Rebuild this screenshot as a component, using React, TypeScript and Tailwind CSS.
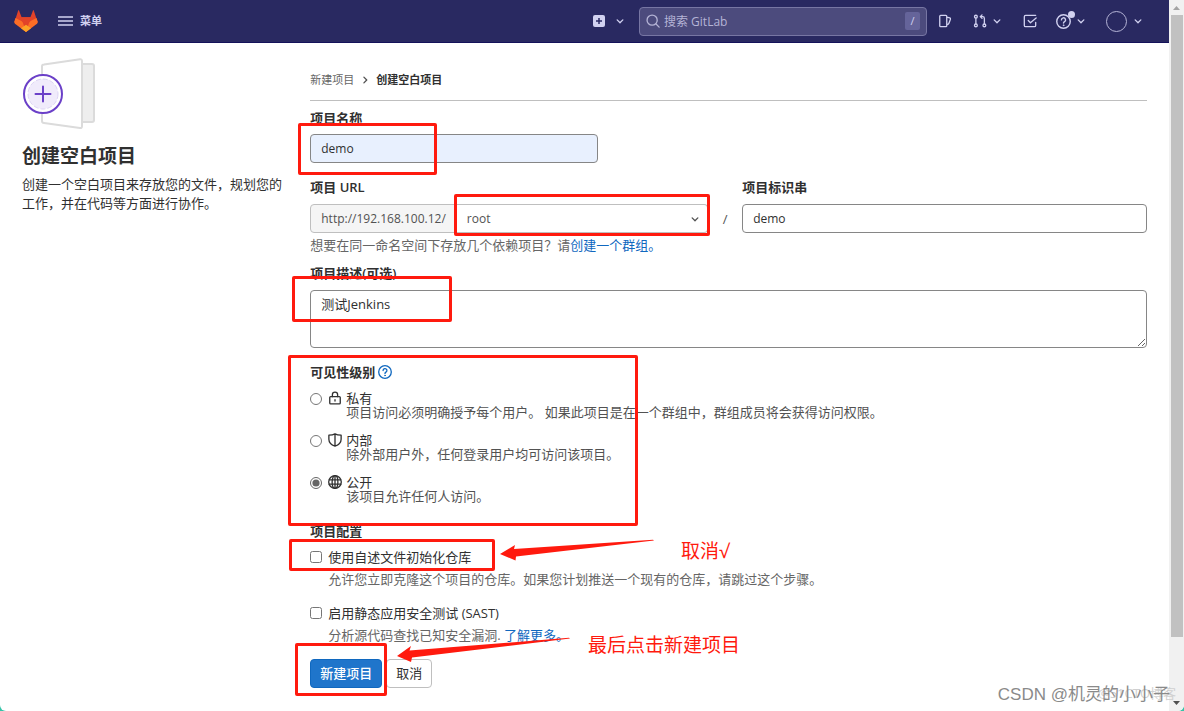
import { useState } from "react";
import type { ReactNode } from "react";
import clsx from "clsx";

interface IconProps {
  className?: string;
}

function ChevronDown({ className = "size-3.5" }: IconProps) {
  return (
    <svg viewBox="0 0 16 16" fill="currentColor" className={className}>
      <path d="M4.22 6.22a.75.75 0 0 1 1.06 0L8 8.94l2.72-2.72a.75.75 0 1 1 1.06 1.06l-3.25 3.25a.75.75 0 0 1-1.06 0L4.22 7.28a.75.75 0 0 1 0-1.06z" />
    </svg>
  );
}

function StrokeIcon({ className = "size-3.5", children }: IconProps & { children: ReactNode }) {
  return (
    <svg
      viewBox="0 0 16 16"
      fill="none"
      stroke="currentColor"
      strokeWidth="1.5"
      strokeLinecap="round"
      strokeLinejoin="round"
      className={className}
    >
      {children}
    </svg>
  );
}

function Logo() {
  return (
    <svg viewBox="0 0 24 22" className="h-[22px] w-6">
      <path d="M12 22 .5 12 4.200.400Q4.600-.300 5 .400L7.600 7.200h8.800L19 .400q.4-.7.8 0L23.500 12z" fill="#e24329" />
      <path d="M1.500 8 .3 11.600q-.3 1.400.7 2.200L12 22 7.300 8z" fill="#fc6d26" />
      <path d="M22.500 8l1.200 3.600q.3 1.400-.7 2.200L12 22l4.700-14z" fill="#fc6d26" />
      <path d="M1.500 8 7.300 7.200h9.400l5.800.8Q17 10 12 15 7 10 1.500 8z" fill="#e24329" />
      <path d="M7 18.200 12 14.800l5 3.400L12 22z" fill="#fca326" />
    </svg>
  );
}

function Illustration() {
  return (
    <svg viewBox="0 0 74 72" className="h-[72px] w-[74px]" fill="none">
      <path d="M60 6h10q2 0 2 2v54q0 2-2 2H60" fill="#eee" stroke="#dbdbdb" strokeWidth="2" />
      <path
        d="M22 6.500 58 1.200q2-.2 2 2v65q0 2-2 1.800L22 65q-2-.3-2-2V8.300q0-1.600 2-1.800z"
        fill="#fff"
        stroke="#dbdbdb"
        strokeWidth="2"
      />
      <circle cx="21" cy="36" r="19" fill="#fff" stroke="#6b40c8" strokeWidth="2" />
      <circle cx="21" cy="36" r="15" fill="#f0ebfb" stroke="#ddd4f5" strokeDasharray="5 2" />
      <path d="M13.500 36h15M21 28.500v15" stroke="#6b40c8" strokeWidth="2" strokeLinecap="round" />
    </svg>
  );
}

function QuestionIcon({ className }: IconProps) {
  return (
    <StrokeIcon className={className}>
      <circle cx="8" cy="8" r="7.200" />
      <path d="M5.800 6.300a2.200 2.200 0 1 1 3.300 1.900C8.300 8.700 8 9 8 9.700" />
      <circle cx="8" cy="12" r=".5" fill="currentColor" strokeWidth=".8" />
    </StrokeIcon>
  );
}

const visibilityLevels = [
  {
    id: "private",
    name: "私有",
    help: "项目访问必须明确授予每个用户。 如果此项目是在一个群组中，群组成员将会获得访问权限。",
    icon: (
      <StrokeIcon>
        <rect x="2" y="6.500" width="12" height="8.300" rx="1" />
        <path d="M5 6.500V4.300a3 3 0 0 1 6 0v2.200M8 10v1.500" />
      </StrokeIcon>
    ),
  },
  {
    id: "internal",
    name: "内部",
    help: "除外部用户外，任何登录用户均可访问该项目。",
    icon: (
      <StrokeIcon>
        <path d="M8 1c2 1.200 4 1.500 7 1.500V7c0 4-3 6.500-7 8-4-1.500-7-4-7-8V2.500C4 2.500 6 2.200 8 1zv14" />
      </StrokeIcon>
    ),
  },
  {
    id: "public",
    name: "公开",
    help: "该项目允许任何人访问。",
    icon: (
      <StrokeIcon>
        <circle cx="8" cy="8" r="7.200" />
        <ellipse cx="8" cy="8" rx="3.300" ry="7.200" />
        <path d="M1.400 5.500h13.200M1.400 10.500h13.200M8 1v14" />
      </StrokeIcon>
    ),
  },
];

const labelClass = "block text-[13px] leading-5 font-semibold text-[#303030]";
const inputClass = "h-[29px] rounded border border-[#868686] px-2.5 text-xs text-[#303030]";
const linkClass = "text-[#1068bf]";

function Navbar() {
  return (
    <header className="flex h-[43px] items-center border-b border-[#14125a] bg-[#292961] pr-6 pl-3.5 text-[#d1d1f0]">
      <a href="#home" aria-label="GitLab">
        <Logo />
      </a>
      <button className="ml-5 flex items-center gap-[7px] text-[11px] font-semibold">
        <svg viewBox="0 0 15 10" className="h-2.5 w-[15px]" stroke="currentColor" strokeWidth="1.300">
          <path d="M0 1h15M0 5h15M0 9h15" />
        </svg>
        菜单
      </button>

      <div className="ml-auto flex items-center">
        <button aria-label="新建" className="flex items-center gap-2">
          <svg viewBox="0 0 12 12" className="size-3">
            <rect width="12" height="12" rx="2" fill="currentColor" />
            <path d="M6 3v6M3 6h6" stroke="#292961" strokeWidth="1.500" />
          </svg>
          <ChevronDown />
        </button>
        <div className="ml-3 flex h-[29px] w-72 items-center rounded border border-[#7776a3] bg-[#4c4b7d] px-1.5">
          <StrokeIcon className="size-3.5 shrink-0 text-[#b5b4d6]">
            <circle cx="7" cy="7" r="5.800" />
            <path d="m11.500 11.500 3.500 3.500" />
          </StrokeIcon>
          <input
            aria-label="搜索 GitLab"
            placeholder="搜索 GitLab"
            className="ml-1 min-w-0 flex-1 bg-transparent pt-0.5 text-xs outline-none placeholder:text-[#b5b4d6]"
          />
          <kbd className="flex h-[18px] w-[15px] items-center justify-center rounded-xs bg-[#65649a] font-[inherit] text-[11px]">
            /
          </kbd>
        </div>
        <a href="#issues" aria-label="议题" className="ml-[11px]">
          <StrokeIcon>
            <path d="M3 1.500h6q1 0 1 1v11q0 1-1 1H3q-1 0-1-1v-11q0-1 1-1zM10 3.500l3.500 1q1 .4.700 1.400l-1.700 4.600q-.5 1.500-2.500 2" />
          </StrokeIcon>
        </a>
        <button aria-label="合并请求" className="ml-[21px] flex items-center gap-[3px]">
          <StrokeIcon>
            <circle cx="3.300" cy="3" r="1.600" />
            <circle cx="3.300" cy="13" r="1.600" />
            <circle cx="13" cy="13" r="1.600" />
            <path d="M3.300 4.800v6.400M13 11.200V5q0-2-2-2H8.500M10.300 1 8.300 3l2 2" />
          </StrokeIcon>
          <ChevronDown />
        </button>
        <a href="#todos" aria-label="待办事项" className="ml-[19px]">
          <StrokeIcon>
            <path d="M14.500 1.500H3Q1.500 1.500 1.500 3v10q0 1.500 1.500 1.500h10q1.500 0 1.500-1.500V9.500M6 7.500l2.500 2.500L15 4.500" />
          </StrokeIcon>
        </a>
        <button aria-label="帮助" className="relative ml-[19px] flex items-center gap-[3px]">
          <QuestionIcon className="size-[15px]" />
          <span className="absolute -top-[3px] left-3 size-[7px] rounded-full bg-[#d1d1f0]" />
          <ChevronDown />
        </button>
        <button aria-label="用户" className="ml-[18px] flex items-center gap-1">
          <span className="size-[21px] rounded-full border border-[#b5b4d6]" />
          <ChevronDown />
        </button>
      </div>
    </header>
  );
}

function ProjectForm() {
  const [visibility, setVisibility] = useState("public");

  return (
    <form className="min-w-0 flex-1" onSubmit={(e) => e.preventDefault()}>
      <nav className="flex items-center gap-1 border-b border-[#bfbfbf] pt-[27px] pb-2.5 text-[11px] leading-5">
        <a href="#new" className="text-[#666]">
          新建项目
        </a>
        <ChevronDown className="size-3.5 -rotate-90 text-[#525252]" />
        <a href="#blank" className="font-semibold text-[#303030]">
          创建空白项目
        </a>
      </nav>

      <label htmlFor="name" className={clsx(labelClass, "mt-[7px] mb-1.5")}>
        项目名称
      </label>
      <input id="name" defaultValue="demo" className={clsx(inputClass, "block w-72 bg-[#e8f0fe]")} />

      <div className="mt-3.5 flex items-end">
        <div className="min-w-0 flex-[398]">
          <label htmlFor="namespace" className={clsx(labelClass, "mb-[7px]")}>
            项目 URL
          </label>
          <div className="flex">
            <span className="flex h-[29px] items-center rounded-l border border-[#bfbfbf] bg-[#f5f5f5] px-2.5 text-xs text-[#525252]">
              http://192.168.100.12/
            </span>
            <div className="relative flex-1">
              <select
                id="namespace"
                className="h-[29px] w-full appearance-none rounded-r border border-l-0 border-[#bfbfbf] bg-white px-2.5 text-xs text-[#525252]"
              >
                <option>root</option>
              </select>
              <ChevronDown className="pointer-events-none absolute top-2 right-1.5 size-3.5 text-[#525252]" />
            </div>
          </div>
        </div>
        <span className="w-[34px] text-center text-[13px] leading-7 text-[#525252]">/</span>
        <div className="min-w-0 flex-[405]">
          <label htmlFor="slug" className={clsx(labelClass, "mb-[7px]")}>
            项目标识串
          </label>
          <input id="slug" defaultValue="demo" className={clsx(inputClass, "block w-full")} />
        </div>
      </div>
      <p className="mt-0.5 text-[13px] leading-5 text-[#666]">
        想要在同一命名空间下存放几个依赖项目？请
        <a href="#group" className={linkClass}>
          创建一个群组。
        </a>
      </p>

      <label htmlFor="description" className={clsx(labelClass, "mt-2 mb-[7px]")}>
        项目描述(可选)
      </label>
      <textarea
        id="description"
        defaultValue="测试Jenkins"
        className="block h-[58px] w-full rounded border border-[#868686] px-2.5 py-[3px] text-[13px] leading-5 text-[#303030]"
      />

      <fieldset className="mt-3.5">
        <legend className="flex items-center gap-[3px] text-[13px] leading-5 font-semibold text-[#303030]">
          可见性级别
          <a href="#visibility" aria-label="帮助" className={linkClass}>
            <QuestionIcon className="size-3.5" />
          </a>
        </legend>
        <div className="mt-[9px] flex flex-col gap-3.5">
          {visibilityLevels.map((level) => (
            <label key={level.id} className="flex items-start text-[13px] leading-3.5 text-[#303030]">
              <input
                type="radio"
                name="visibility"
                className="mt-0.5 mr-1.5 size-3 shrink-0 accent-[#666]"
                checked={visibility === level.id}
                onChange={() => setVisibility(level.id)}
              />
              <span className="mr-1 shrink-0">{level.icon}</span>
              <span>
                <span className="block">{level.name}</span>
                <span className="block text-[#525252]">{level.help}</span>
              </span>
            </label>
          ))}
        </div>
      </fieldset>

      <fieldset className="mt-[18px] text-[13px] leading-5">
        <legend className={labelClass}>项目配置</legend>
        <label className="mt-1.5 flex items-center gap-1.5 text-[#303030]">
          <input type="checkbox" className="size-3" />
          使用自述文件初始化仓库
        </label>
        <p className="mt-0.5 pl-[18px] text-[#666]">
          允许您立即克隆这个项目的仓库。如果您计划推送一个现有的仓库，请跳过这个步骤。
        </p>
        <label className="mt-3.5 flex items-center gap-1.5 text-[#303030]">
          <input type="checkbox" className="size-3" />
          启用静态应用安全测试 (SAST)
        </label>
        <p className="mt-0.5 pl-[18px] text-[#666]">
          分析源代码查找已知安全漏洞.{" "}
          <a href="#sast" className={linkClass}>
            了解更多。
          </a>
        </p>
      </fieldset>

      <div className="mt-3.5 flex gap-1 text-[13px]">
        <button type="submit" className="h-[29px] rounded border border-[#1068bf] bg-[#1f75cb] px-[9px] font-medium text-white">
          新建项目
        </button>
        <button type="button" className="h-[29px] rounded border border-[#bfbfbf] bg-white px-[9px] text-[#303030]">
          取消
        </button>
      </div>
    </form>
  );
}

const marks = [
  "top-[123px] left-[298px] h-[52px] w-[139px]",
  "top-[194px] left-[454px] h-[42px] w-[256px]",
  "top-[276px] left-[292px] h-[46px] w-[160px]",
  "top-[355px] left-[288px] h-[171px] w-[350px]",
  "top-[539px] left-[289px] h-[32px] w-[206px]",
  "top-[643px] left-[295px] h-[53px] w-[92px]",
];

// Red tutorial marks drawn over the form
function Annotations() {
  return (
    <div className="pointer-events-none absolute inset-0 text-[#ff1a0e]">
      {marks.map((mark) => (
        <div key={mark} className={clsx("absolute rounded-xs border-[3px] border-[#ff1a0e]", mark)} />
      ))}
      <svg viewBox="0 0 154 22" className="absolute top-[539px] left-[500px] h-[22px] w-[154px]" fill="currentColor">
        <path d="M0 15 15 6l-1 4L153 .8 154 1.500 16 17.500l-.5 4z" />
      </svg>
      <svg viewBox="0 0 173 26" className="absolute top-[637px] left-[397px] h-[26px] w-[173px]" fill="currentColor">
        <path d="M0 19 14 9l-1.500 4.500L172 .8l1 .7L15 20.500l-1 4.500z" />
      </svg>
      <span className="absolute top-[539px] left-[681px] text-[19px] leading-6">取消√</span>
      <span className="absolute top-[633px] left-[588px] text-[19px] leading-6">最后点击新建项目</span>
    </div>
  );
}

function Scrollbar() {
  return (
    <div className="flex w-[15px] shrink-0 flex-col items-center bg-[#f1f1f1]">
      <svg viewBox="0 0 15 15" className="size-[15px]">
        <path d="M4 10h7L7.500 6z" fill="#a3a3a3" />
      </svg>
      <div className="w-3 flex-[622] bg-[#c1c1c1]" />
      <div className="flex-[59]" />
      <svg viewBox="0 0 15 15" className="size-[15px]">
        <path d="M4 5h7L7.500 9z" fill="#505050" />
      </svg>
    </div>
  );
}

export default function App() {
  return (
    <div className="bg-[#35c4a8] font-['Open_Sans','Noto_Sans_CJK_SC',sans-serif]">
      <div className="relative flex min-h-screen overflow-hidden rounded-b-md bg-white">
        <div className="min-w-0 flex-1">
          <Navbar />
          <main className="flex gap-[7px] px-[22px]">
            <aside className="w-1/4 shrink-0 pt-[15px]">
              <Illustration />
              <h1 className="mt-3.5 text-[19px] leading-6 font-semibold text-[#303030]">创建空白项目</h1>
              <p className="mt-[7px] pr-4 text-[13px] leading-[19px] text-[#303030]">
                创建一个空白项目来存放您的文件，规划您的工作，并在代码等方面进行协作。
              </p>
            </aside>
            <ProjectForm />
          </main>
        </div>
        <Scrollbar />
        <Annotations />
        <span className="pointer-events-none absolute right-2 bottom-2 text-[13px] leading-5 text-[#d0d0d0]">
          @51CTO博客
        </span>
        <span className="pointer-events-none absolute right-3.5 bottom-1 font-['Liberation_Sans','Noto_Sans_CJK_SC',sans-serif] text-[17px] leading-6 text-[#8a8a8a]">
          CSDN @机灵的小小子
        </span>
      </div>
    </div>
  );
}
